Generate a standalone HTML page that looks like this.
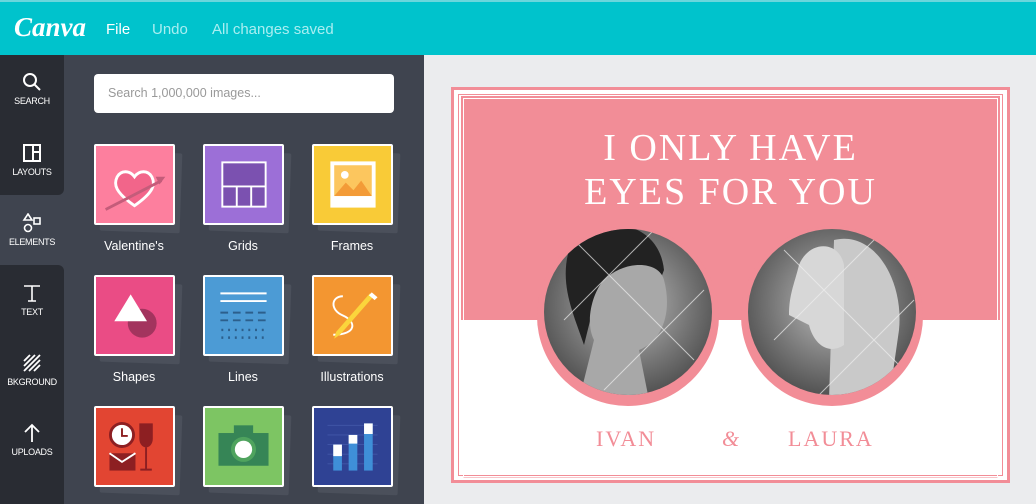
<!DOCTYPE html>
<html><head><meta charset="utf-8"><style>
*{margin:0;padding:0;box-sizing:border-box}
body{width:1036px;height:504px;overflow:hidden;background:#ebecee;font-family:"Liberation Sans",sans-serif;position:relative}
.top{position:absolute;left:0;top:0;width:1036px;height:55px;background:#00c3cc;border-top:2px solid #6ad6dc}
.top span{position:absolute;top:19px;font-size:15px;color:#a9eef1}
.logo{position:absolute;left:14px;top:10px;font-family:"Liberation Serif",serif;font-style:italic;font-size:27px;color:#fff;font-weight:bold}
.panel{position:absolute;left:0;top:55px;width:424px;height:449px;background:#3f444f}
.rail1{position:absolute;left:0;top:55px;width:64px;height:140px;background:#292c33;border-bottom-right-radius:6px}
.rail2{position:absolute;left:0;top:265px;width:64px;height:239px;background:#292c33;border-top-right-radius:6px}
.ri{position:absolute;left:0;width:64px;text-align:center;color:#fff;font-size:9px;letter-spacing:-.3px}
.ri svg{display:block;margin:0 auto 4px}
.search{position:absolute;left:94px;top:74px;width:300px;height:39px;background:#fff;border-radius:4px;font-size:12.5px;color:#999;padding:12px 14px}
.tile{position:absolute;width:81px;height:81px;border:2px solid #fff;border-radius:2px;overflow:hidden}
.sh{position:absolute;width:80px;height:80px;background:#4b505b;transform:rotate(2deg);border-radius:2px}
.lab{position:absolute;width:110px;text-align:center;color:#fff;font-size:12.5px}
.card{position:absolute;left:451px;top:87px;width:559px;height:396px;border:3px solid #f28d97;background:#fff}
</style></head><body>
<div class="top">
<div class="logo">Canva</div>
<span style="left:106px;color:#fff">File</span>
<span style="left:152px">Undo</span>
<span style="left:212px">All changes saved</span>
</div>
<div class="panel"></div>
<div class="rail1"></div><div class="rail2"></div>
<div class="ri" style="top:72px"><svg width="20" height="20" viewBox="0 0 20 20"><circle cx="8" cy="8" r="6" fill="none" stroke="#fff" stroke-width="2"/><path d="M12 12l6 6" stroke="#fff" stroke-width="2"/></svg>SEARCH</div>
<div class="ri" style="top:143px"><svg width="20" height="20" viewBox="0 0 20 20"><rect x="2" y="2" width="16" height="16" fill="none" stroke="#fff" stroke-width="2"/><path d="M11 2v16M11 9h7" stroke="#fff" stroke-width="2"/></svg>LAYOUTS</div>
<div class="ri" style="top:213px"><svg width="20" height="20" viewBox="0 0 20 20"><path d="M6 1l4 6H2z" fill="none" stroke="#fff" stroke-width="1.6"/><rect x="12" y="5" width="6" height="6" fill="none" stroke="#fff" stroke-width="1.6"/><circle cx="6" cy="15" r="3.5" fill="none" stroke="#fff" stroke-width="1.6"/></svg>ELEMENTS</div>
<div class="ri" style="top:283px"><svg width="20" height="20" viewBox="0 0 20 20"><path d="M2 3h16M10 3v15M6 18h8" stroke="#fff" stroke-width="1.6" fill="none"/></svg>TEXT</div>
<div class="ri" style="top:353px"><svg width="20" height="20" viewBox="0 0 20 20"><path d="M2 8l6-6M2 13l11-11M2 18l16-16M7 18l11-11M12 18l6-6" stroke="#fff" stroke-width="1.8"/></svg>BKGROUND</div>
<div class="ri" style="top:423px"><svg width="20" height="20" viewBox="0 0 20 20"><path d="M10 19V2M3 9l7-7 7 7" stroke="#fff" stroke-width="1.8" fill="none"/></svg>UPLOADS</div>
<div class="search">Search 1,000,000 images...</div>

<div class="sh" style="left:101px;top:152px"></div><div class="sh" style="left:210px;top:152px"></div><div class="sh" style="left:319px;top:152px"></div>
<div class="tile" style="left:94px;top:144px;background:#fd7f9e"><svg width="77" height="77" viewBox="0 0 80 80"><path d="M40 62C20 48 18 40 22 32c4-7 13-7 18 0 5-7 14-7 18 0 4 8 2 16-18 30z" fill="#f2658a" stroke="#fff" stroke-width="3"/><path d="M10 66l58-30" stroke="#c45c7a" stroke-width="3"/><path d="M72 32l-10 0 4 8z" fill="#c45c7a"/></svg></div>
<div class="tile" style="left:203px;top:144px;background:#9c6fd7"><svg width="77" height="77" viewBox="0 0 80 80"><rect x="18" y="17" width="45" height="46" fill="#7b51b0" stroke="#fff" stroke-width="2"/><path d="M18 42h45M33 42v21M48 42v21" stroke="#fff" stroke-width="2"/></svg></div>
<div class="tile" style="left:312px;top:144px;background:#f9cb37"><svg width="77" height="77" viewBox="0 0 80 80"><rect x="17" y="16" width="47" height="48" fill="#fff"/><rect x="21" y="20" width="39" height="32" fill="#fcc65e"/><circle cx="32" cy="30" r="4" fill="#fff"/><path d="M21 52l12-14 8 8 8-10 11 16z" fill="#f39b37"/></svg></div>
<div class="lab" style="left:79px;top:239px">Valentine's</div>
<div class="lab" style="left:188px;top:239px">Grids</div>
<div class="lab" style="left:297px;top:239px">Frames</div>

<div class="sh" style="left:101px;top:283px"></div><div class="sh" style="left:210px;top:283px"></div><div class="sh" style="left:319px;top:283px"></div>
<div class="tile" style="left:94px;top:275px;background:#ea4c85"><svg width="77" height="77" viewBox="0 0 80 80"><circle cx="48" cy="48" r="15" fill="#a3345e"/><path d="M36 18l17 28H19z" fill="#fff"/></svg></div>
<div class="tile" style="left:203px;top:275px;background:#4c9bd5"><svg width="77" height="77" viewBox="0 0 80 80"><path d="M16 17h48M16 25h48" stroke="#fff" stroke-width="2"/><path d="M16 37h48M16 45h48" stroke="#2c5f8c" stroke-width="2" stroke-dasharray="8 5"/><path d="M17 55h48M17 63h48" stroke="#2c5f8c" stroke-width="2.5" stroke-dasharray="2 5"/></svg></div>
<div class="tile" style="left:312px;top:275px;background:#f39631"><svg width="77" height="77" viewBox="0 0 80 80"><path d="M30 20c-12 0-14 14 0 20s15 20-10 20" stroke="#fff" stroke-width="2" fill="none"/><path d="M62 20l-35 40-6 4 2-7 35-40z" fill="#fbd53c"/><path d="M60 16l6 5-3 3-6-5z" fill="#fff"/></svg></div>
<div class="lab" style="left:79px;top:370px">Shapes</div>
<div class="lab" style="left:188px;top:370px">Lines</div>
<div class="lab" style="left:297px;top:370px">Illustrations</div>

<div class="sh" style="left:101px;top:414px"></div><div class="sh" style="left:210px;top:414px"></div><div class="sh" style="left:319px;top:414px"></div>
<div class="tile" style="left:94px;top:406px;background:#e24532"><svg width="77" height="77" viewBox="0 0 80 80"><circle cx="27" cy="28" r="12" fill="#fff" stroke="#8d1f22" stroke-width="3"/><path d="M27 21v8h6" stroke="#8d1f22" stroke-width="2" fill="none"/><path d="M45 16h14v16c0 6-4 9-7 9s-7-3-7-9z" fill="#8d1f22"/><path d="M52 41v23M46 64h12" stroke="#8d1f22" stroke-width="2"/><rect x="14" y="47" width="27" height="18" fill="#8d1f22"/><path d="M14 47l13 9 14-9" stroke="#fff" stroke-width="2" fill="none"/></svg></div>
<div class="tile" style="left:203px;top:406px;background:#7dc563"><svg width="77" height="77" viewBox="0 0 80 80"><rect x="14" y="26" width="52" height="34" fill="#368556"/><rect x="30" y="18" width="20" height="10" fill="#368556"/><circle cx="40" cy="43" r="13" fill="#4fa35e"/><circle cx="40" cy="43" r="9" fill="#fff"/></svg></div>
<div class="tile" style="left:312px;top:406px;background:#2f4294"><svg width="77" height="77" viewBox="0 0 80 80"><path d="M14 18h52M14 28h52M14 38h52M14 48h52M14 58h52" stroke="#4257a8" stroke-width="1"/><rect x="20" y="38" width="9" height="27" fill="#3f8fd8"/><rect x="20" y="38" width="9" height="12" fill="#fff"/><rect x="36" y="28" width="9" height="37" fill="#3f8fd8"/><rect x="36" y="28" width="9" height="9" fill="#fff"/><rect x="52" y="16" width="9" height="49" fill="#3f8fd8"/><rect x="52" y="16" width="9" height="11" fill="#fff"/></svg></div>

<div class="card">
 <div style="position:absolute;left:4px;top:4px;right:4px;bottom:4px;border:1px solid #f28d97"></div>
 <div style="position:absolute;left:7px;top:6px;width:539px;height:224px;background:#f28d97"></div>
 <div style="position:absolute;left:9px;top:8px;width:535px;height:380px;border:1px solid #fff;border-bottom-color:#f8c4c9"></div>
 <div style="position:absolute;left:0;width:553px;top:36px;text-align:center;color:#fff;font-family:'Liberation Serif',serif;font-size:38px;line-height:44px;letter-spacing:2px">I ONLY HAVE<br>EYES FOR YOU</div>
 <svg style="position:absolute;left:0;top:0" width="553" height="390">
  <defs>
   <radialGradient id="g" cx="50%" cy="45%" r="60%"><stop offset="0" stop-color="#bdbdbd"/><stop offset=".6" stop-color="#777"/><stop offset="1" stop-color="#4a4a4a"/></radialGradient>
   <clipPath id="c1"><ellipse cx="174" cy="222" rx="84" ry="83"/></clipPath>
   <clipPath id="c2"><ellipse cx="378" cy="222" rx="84" ry="83"/></clipPath>
  </defs>
  <ellipse cx="174" cy="226" rx="91" ry="90" fill="#f28d97"/>
  <ellipse cx="174" cy="222" rx="84" ry="83" fill="url(#g)"/>
  <g clip-path="url(#c1)">
   <path d="M115 160c30-40 90-30 95 20l-15 40c-30 10-45-10-55-5l-10 40c-10-30-25-60-15-95z" fill="#222"/>
   <path d="M150 190c20-20 55-20 60 0 8 30 0 60-25 70l10 50h-70l15-60c-10-20 0-50 10-60z" fill="#a8a8a8"/>
   <path d="M120 150l120 120M110 230l110-110M150 300l100-100" stroke="#eee" stroke-width="1" opacity=".7"/>
  </g>
  <ellipse cx="378" cy="226" rx="91" ry="90" fill="#f28d97"/>
  <ellipse cx="378" cy="222" rx="84" ry="83" fill="url(#g)"/>
  <g clip-path="url(#c2)">
   <path d="M380 150c40-10 70 40 65 90l-10 70h-60z" fill="#c9c9c9"/>
   <path d="M345 175c10-25 40-25 45 0v80c-15 10-30 0-35-20l-20-10c0-20 5-30 10-50z" fill="#d7d7d7"/>
   <path d="M330 160l120 120M320 250l120-120M360 310l100-100" stroke="#eee" stroke-width="1" opacity=".7"/>
  </g>
  <text x="142" y="356" fill="#f28d97" font-family="Liberation Serif,serif" font-size="22" letter-spacing="2">IVAN</text>
  <text x="268" y="356" fill="#f28d97" font-family="Liberation Serif,serif" font-size="22" font-style="italic">&amp;</text>
  <text x="334" y="356" fill="#f28d97" font-family="Liberation Serif,serif" font-size="22" letter-spacing="2">LAURA</text>
 </svg>
</div>
</body></html>
